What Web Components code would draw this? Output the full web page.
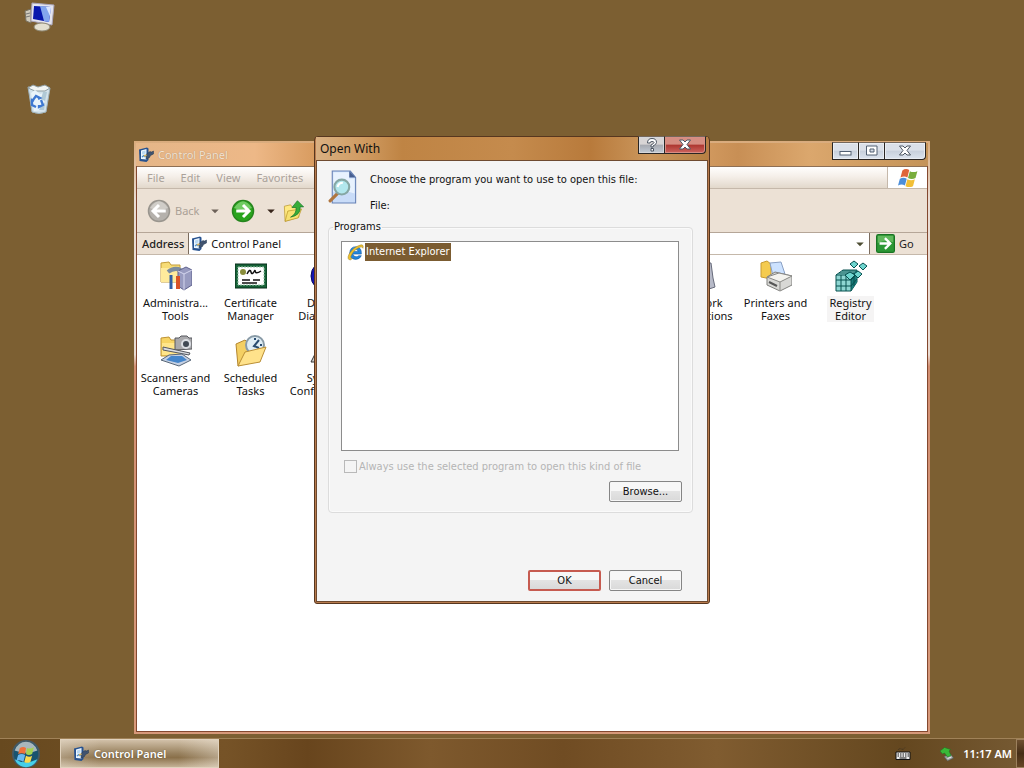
<!DOCTYPE html>
<html lang="en">
<head>
<meta charset="utf-8">
<title>Desktop</title>
<style>
  html, body {
    margin: 0;
    height: 100%;
  }
  body {
    font-family: "Noto Sans", "Open Sans", sans-serif;
    font-size: 11px;
    line-height: 13px;
    color: #111;
    cursor: default;
    overflow: hidden;
  }
</style>
</head>
<body>
<desk-top></desk-top>

<script>
// all artwork is drawn on a 32x32 grid
const ICONS = {
  computer: `
    <path d="M2 9l6-2v14l-5-2z" fill="#cfcabc" stroke="#77705f"/><path d="M3 12l4-1M3 15l4-1" stroke="#777"/>
    <path d="M9 1l22 2-2 20-21-4z" fill="#e4e4ee" stroke="#aaa6ba"/>
    <path d="M11 4l17 1-2 15-16-3z" fill="#0717ad"/><path d="M17 4l11 1-2 15-5-1z" fill="#83a6ee"/><path d="M23 5l5 0-1 9z" fill="#dbe6ff"/>
    <path d="M17 21h5v4h-5z" fill="#b5b19f"/><ellipse cx="19" cy="25" rx="8" ry="4" fill="#e4e0d0" stroke="#8f8974"/>`,
  bin: `
    <path d="M5 4l22 1-4 24q-7 3-14 0z" fill="#d3e2ea" stroke="#9fb2bb"/>
    <path d="M5 5l5-3 5 2 7-2 5 3-5 3-10 0z" fill="#f2f5f4" stroke="#8e9da3"/>
    <path d="M8 10l4-3 5 4 6-2-3 18-9 1z" fill="#eaf4fa"/><path d="M20 9l4 0-2 9-4-2zM18 22l4-2-1 7-5 0z" fill="#b0c9d6"/>
    <path d="M10 17l3-4 4 2-2 1M18 17l2 5-4 2v-2M13 24l-4-2 0-5 2 1" fill="none" stroke="#3e78d1" stroke-width="2.3"/>`,
  panel: `
    <path d="M2 5l16-4 3 2v23l-4 4-14-2z" fill="#27528f"/><path d="M6 7l11-3v21l-11-1z" fill="#edf7ff"/>
    <path d="M8 9l7-2v6l-7 2z" fill="#b9d8f2"/><path d="M8 20l4-3 3 3" fill="none" stroke="#4f90c9" stroke-width="3"/>
    <path d="M17 14l7-5 3 1 4-2v6l-6 3-2 4-7 3z" fill="#40536f" stroke="#233952"/><path d="M12 18l5-2" stroke="#d9b35d" stroke-width="3"/>`,
  back: `
    <circle cx="16" cy="16" r="14" fill="#b5b1ac" stroke="#99958e" stroke-width="2"/><path d="M4 12q12-18 24 0-12 5-24 0" fill="#d0cdc8"/>
    <path d="M25 16H9M16 8l-8 8 8 8" fill="none" stroke="#fff" stroke-width="4"/>`,
  forward: `
    <circle cx="16" cy="16" r="14" fill="#29a41e" stroke="#26851e" stroke-width="2"/><path d="M4 12q12-18 24 0-12 5-24 0" fill="#70cb63"/>
    <path d="M7 16h16M16 8l8 8-8 8" fill="none" stroke="#fff" stroke-width="4"/>`,
  up: `
    <path d="M2 9l9-2 3 4 9-1v15l-20 6z" fill="#ffe982" stroke="#b89328"/><path d="M7 16l20-3-5 13-19 5z" fill="#f7e070" stroke="#b89328"/>
    <path d="M11 25q9-5 8-14h-6l8-10 9 9h-5q1 12-14 15z" fill="#37ad38" stroke="#18752d"/>`,
  go: `
    <rect x="1" y="1" width="30" height="30" rx="3" fill="#2c9735" stroke="#187323" stroke-width="2"/><path d="M3 3h26v11q-12-5-26 1z" fill="#61b85d"/>
    <path d="M6 16h18M15 7l9 9-9 9" fill="none" stroke="#fff" stroke-width="4"/>`,
  flag: `
    <path d="M7 4q5-4 11-1l-3 12q-5-3-11 0z" fill="#df653a"/><path d="M19 5q5 3 12 0l-3 11q-6 3-12 0z" fill="#79ad3c"/>
    <path d="M3 17q6-3 11 0l-3 11q-5-3-11 0z" fill="#4c8ed9"/><path d="M15 18q6 3 12 0l-3 11q-6 3-12 0z" fill="#f2bf35"/>`,
  orb: `
    <circle cx="16" cy="16" r="15" fill="#18536f" stroke="#455963" stroke-width="2"/><path d="M3 22q12 7 26 0-4 9-13 9T3 22" fill="#45d0e9"/>
    <path d="M3 12Q7 2 16 2t13 10q-12 5-26 0" fill="#a9b7bb"/>
    <path d="M9 9q4-2 7 0l-1 7q-4-2-8 0z" fill="#ef713a"/><path d="M17 9q4 2 8-1l-2 8q-4 2-7 0z" fill="#a3d151"/>
    <path d="M7 17q4-2 8 0l-2 8q-4-3-8-1z" fill="#69b9f0"/><path d="M16 18q4 2 7 0l-2 7q-4 2-7 0z" fill="#fbd84e"/>`,
  search: `
    <path d="M4 1h17l5 6v24H4z" fill="#c9dcf8" stroke="#6681b5"/><path d="M5 2h15v6h5v14q-12-4-20-1z" fill="#e8f2fe"/><path d="M20 1l6 6h-6z" fill="#475f91"/>
    <path d="M2 29l8-8" stroke="#b0763f" stroke-width="3" stroke-linecap="round"/><circle cx="13" cy="16" r="7" fill="#b2e7ed" stroke="#86a7a4" stroke-width="2"/>
    <path d="M9 16q1-4 5-4" stroke="#fff" stroke-width="2" fill="none"/>`,
  ie: `
    <path d="M27 19H11q1 5 6 5 3 0 5-2h5q-3 7-11 7-11-1-11-12Q6 5 17 5q11 1 10 14M11 14h10q-1-4-5-4t-5 4" fill="#2286dd" stroke="#0f529f" fill-rule="evenodd"/>
    <path d="M6 30q-7-1-2-11Q12 6 25 2q7-2 5 6-1-4-6-2Q11 12 7 24q-2 4 3 3-1 2-4 3" fill="#efc12f" stroke="#9e8326"/>`,
  admin: `
    <path d="M1 3l8-1 2 3h9v17H1z" fill="#f7dc76" stroke="#c29b38"/><path d="M1 8h19v14H1z" fill="#ffeb9c"/>
    <path d="M8 12q6-5 13-2" fill="none" stroke="#7c8da0" stroke-width="4"/><path d="M18 11l8-4 6 3v15l-8 5-6-4z" fill="#989bc0" stroke="#5e608d"/>
    <path d="M18 11l6 3v16M24 14l8-4" fill="none" stroke="#d4d6ee"/><path d="M11 15v14" stroke="#315fa5" stroke-width="3"/><path d="M18 16v13" stroke="#d85328" stroke-width="4"/>`,
  cert: `
    <path d="M0 4h32v24H0z" fill="#176338" stroke="#072d19"/><path d="M3 7h26v18H3z" fill="#fff" stroke="#9bc5aa" stroke-dasharray="2 1"/>
    <circle cx="8" cy="12" r="3" fill="#898d3b"/><path d="M12 14q3-6 4-2t4-2q0 5 6 1M7 20h8M18 20h7M7 23h15" stroke="#111" stroke-width="1.5" fill="none"/>`,
  dx: `<circle cx="16" cy="16" r="15" fill="#1414b5" stroke="#07075c"/><path d="M8 7l16 18M24 7L8 25" stroke="#f4e640" stroke-width="4"/>`,
  scanner: `
    <path d="M1 3l8-1 2 3h9v16H1z" fill="#f7d464" stroke="#be9334"/><path d="M2 8h18v12H2z" fill="#ffe58a"/>
    <path d="M15 3h4l2-2h6l2 2h3v11l-17 1z" fill="#a9a9ac" stroke="#57595e"/><circle cx="26" cy="9" r="4" fill="#404953" stroke="#dadde2" stroke-width="2"/>
    <path d="M3 12l27 6-1 2-26-5z" fill="#d9dce2" stroke="#54575e"/><path d="M9 20l13-1 9 6-12 6-18-6z" fill="#c5d0e3" stroke="#586778"/><path d="M11 21l11 0 5 4-9 3-12-3z" fill="#4586cb"/>`,
  tasks: `
    <path d="M1 9l9-4 3 3 9-2v16L3 31z" fill="#f4cf63" stroke="#b4862e"/>
    <circle cx="20" cy="10" r="9" fill="#dfedf5" stroke="#899ba7" stroke-width="2"/><path d="M24 5l-5 6 5 2M20 3v2M27 10h-2" stroke="#294c70" stroke-width="2" fill="none"/>
    <path d="M3 31l7-14 21-5-6 15z" fill="#ffe28b" stroke="#ba8e35"/>`,
  config: `<path d="M1 27l4-8 5-2h12l8 10zM10 5h14v12H10z" fill="#cfcfcf" stroke="#333"/>`,
  network: `<path d="M8 5h14v14H8z" fill="#88aee0" stroke="#667"/><path d="M20 3l6 0 2 15 2 9-9 3z" fill="#b7bac8" stroke="#676b7b"/>`,
  printer: `
    <path d="M1 3l6-2 4 3v15l-10-2z" fill="#f4cb4f" stroke="#c79b32"/><path d="M10 3l11-1 4 12-12 2z" fill="#cce2ff" stroke="#8aa0c4"/>
    <path d="M7 17l8-5 17 4v9l-12 6-13-6z" fill="#d8d8d5" stroke="#81817e"/><path d="M7 17l13 5 12-6-13-3zM20 22v8" fill="#f4f3ee" stroke="#898986"/><path d="M9 22l8 4" stroke="#555" stroke-width="2"/>`,
  registry: `
    <path d="M1 15l7-5h14v12l-6 9H1z" fill="#8ed6d2" stroke="#07504f"/><path d="M16 15l6-5v12l-6 9z" fill="#187b79"/>
    <path d="M1 15h15v16M6 15v16M11 15v16M1 20h15M1 26h15M4 13h15v13M7 11h15M16 20l6-6M16 26l6-7" fill="none" stroke="#07504f"/>
    <path d="M10 15l5-3 5 3-5 5zM19 1l4 3-4 4-4-4zM28 3l4 3-4 4-4-4zM23 11l4 3-4 4-4-4z" fill="#6ed5cf" stroke="#07504f"/>`,
  keyboard: `<path d="M6 8q3-4 7-2t7-3" fill="none" stroke="#222" stroke-dasharray="2 1"/><path d="M2 12h28v15H2z" fill="#eee" stroke="#111" stroke-width="2"/><path d="M5 16h23M5 20h23" stroke="#111" stroke-width="2" stroke-dasharray="3 2"/><path d="M9 24h14" stroke="#111" stroke-width="2"/>`,
  eject: `<path d="M10 21l13-5 6 8-12 6z" fill="#9aa1a0" stroke="#4c5350"/><path d="M17 25l8-3" stroke="#eee" stroke-width="2"/><path d="M2 10l9-7 12 4-3 3 4 9-7 3-6-8-4 2z" fill="#39b838" stroke="#1b741d"/>`,
  min: `<rect x="4" y="17" width="22" height="7" fill="#fff" stroke="#526073" stroke-width="2"/>`,
  max: `<path d="M5 6h21v18H5zM12 12h8v6h-8z" fill="#fff" fill-rule="evenodd" stroke="#526073" stroke-width="2"/>`,
  close: `<path d="M5 6h7l4 4 4-4h7l-7 9 7 9h-7l-4-4-4 4H5l7-9z" fill="#fff" stroke="#4d5663" stroke-width="2"/>`,
  help: `<path d="M7 12q0-9 9-9t9 8q0 4-7 7v2h-4v-4q6-3 6-5t-4-2-4 3zM14 23h5v5h-5z" fill="#fff" stroke="#4d5663" stroke-width="2"/>`,
  arrow: `<path d="M4 11h24L16 23z" fill="currentColor"/>`
};

class GlyphIcon extends HTMLElement {
  connectedCallback() {
    const size = this.getAttribute('size') || 16;
    this.attachShadow({ mode: 'open' }).innerHTML = `
      <style>
        :host { display: block; flex: none; }
        svg { display: block; }
      </style>
      <svg width="${size}" height="${size}" viewBox="0 0 32 32" fill="none" aria-hidden="true">${ICONS[this.getAttribute('name')]}</svg>
    `;
  }
}

class FolderItem extends HTMLElement {
  connectedCallback() {
    this.attachShadow({ mode: 'open' }).innerHTML = `
      <style>
        :host {
          display: flex;
          flex-direction: column;
          align-items: center;
          gap: 4px;
          text-align: center;
        }
        .label { padding: 0 2px; }
        :host([focused]) .label { background: #f5f4f4; }
      </style>
      <glyph-icon name="${this.getAttribute('icon')}" size="32"></glyph-icon>
      <div class="label"><slot></slot></div>
    `;
  }
}

class CaptionButtons extends HTMLElement {
  connectedCallback() {
    const names = this.getAttribute('buttons').split(' ');
    this.attachShadow({ mode: 'open' }).innerHTML = `
      <style>
        :host { display: flex; flex: none; }
        button {
          width: 26px;
          height: 18px;
          padding: 0;
          display: flex;
          align-items: center;
          justify-content: center;
          border: 1px solid #2a2624;
          border-top-color: #75675b;
          border-right: 0;
          background: linear-gradient(#dbe0e9 45%, #c8d0dc 50%, #dbe3ee);
          box-shadow: inset 0 0 0 1px #e9edf3;
        }
        button:first-child { border-bottom-left-radius: 4px; }
        button:last-child {
          width: 42px;
          border-right: 1px solid #2a2624;
          border-bottom-right-radius: 4px;
        }
        :host([active]) button {
          background: linear-gradient(#d8d5d5 45%, #a6a9b0 50%, #c3cbd5);
          box-shadow: inset 0 0 0 1px #d5d7dc;
        }
        :host([active]) button:last-child {
          background: linear-gradient(#d68d82 45%, #ad3630 50%, #ce6560);
          box-shadow: inset 0 0 0 1px #d98e84;
        }
      </style>
      ${names.map((n) => `<button type="button" aria-label="${n}"><glyph-icon name="${n}" size="16"></glyph-icon></button>`).join('')}
    `;
  }
}

class PushButton extends HTMLElement {
  connectedCallback() {
    this.attachShadow({ mode: 'open' }).innerHTML = `
      <style>
        :host { display: block; }
        button {
          width: 73px;
          height: 21px;
          padding: 0;
          font: inherit;
          color: #111;
          border: 1px solid #858585;
          border-radius: 2px;
          background: linear-gradient(#f7f7f7 45%, #e3e3e3 50%, #d9d9d9);
          box-shadow: inset 0 0 0 1px #f6f6f6;
        }
        :host([default]) button {
          border: 2px solid #c65b50;
          box-shadow: none;
        }
      </style>
      <button type="button"><slot></slot></button>
    `;
  }
}

class ExplorerWindow extends HTMLElement {
  connectedCallback() {
    this.attachShadow({ mode: 'open' }).innerHTML = `
      <style>
        :host {
          display: flex;
          flex-direction: column;
          box-sizing: border-box;
          border: 2px solid;
          border-image: linear-gradient(#d9ab7c, #e9dcd3 10%, #e9dcd3 36%, #d28f72 38%, #d7997a) 2;
          background: #fff;
          box-shadow: inset 0 0 0 1px #84482f;
        }
        header {
          display: flex;
          align-items: center;
          gap: 4px;
          height: 23px;
          padding-left: 2px;
          background: linear-gradient(90deg, #e5b688, #edb887 15%, #cf8f4e 26%, #d69e63 70%, #c88f55 76%, #dba76d 85%, #c49358);
          color: #f6e4d2;
        }
        h1 {
          margin: 0;
          flex: 1;
          font: inherit;
          text-shadow: 0 0 1px #9c7c60;
        }
        caption-buttons { align-self: flex-start; margin: -1px 2px 0 0; }
        .bars { margin: 0 1px; background: #ece1d5; }
        nav {
          display: flex;
          height: 23px;
          border-top: 1px solid #8e6f54;
          border-bottom: 1px solid #c5b8aa;
          box-sizing: border-box;
          background: linear-gradient(#fffefd, #f5efe9 45%, #e2d8cb);
        }
        .menus { display: flex; align-items: center; gap: 16px; flex: 1; padding-left: 10px; }
        nav a { color: #aaa29a; text-decoration: none; }
        .brand {
          display: flex;
          width: 39px;
          align-items: center;
          justify-content: center;
          background: #fff;
          border-left: 1px solid #c5b8aa;
        }
        .tools { display: flex; align-items: center; height: 43px; padding-left: 10px; }
        .tools button {
          display: flex;
          align-items: center;
          gap: 4px;
          border: 0;
          padding: 0;
          background: none;
          font: inherit;
          color: #aaa096;
        }
        .tools .drop { margin: 0 11px; color: #6d6259; }
        .tools .drop.on { margin-right: 7px; color: #37251b; }
        .address {
          display: flex;
          align-items: center;
          height: 23px;
          border-top: 1px solid #b5a698;
          border-bottom: 1px solid #c5b8aa;
          box-sizing: border-box;
          padding-left: 5px;
        }
        .address label { color: #222; font-weight: 500; padding-right: 4px; }
        .field {
          display: flex;
          flex: 1;
          align-self: stretch;
          align-items: center;
          gap: 4px;
          padding: 0 4px 0 2px;
          background: #fff;
          border: solid #7b6c5e;
          border-width: 0 1px;
        }
        .field input {
          flex: 1;
          min-width: 0;
          border: 0;
          padding: 0;
          outline: 0;
          background: none;
          font: inherit;
          color: #111;
        }
        .field button { border: 0; padding: 0; background: none; color: #4d4d33; }
        .go {
          display: flex;
          align-items: center;
          gap: 4px;
          width: 57px;
          padding: 0 0 0 6px;
          box-sizing: border-box;
          border: 0;
          background: none;
          font: inherit;
          color: #222;
        }
        main {
          display: grid;
          grid-template-columns: repeat(auto-fill, 75px);
          grid-auto-rows: 75px;
          flex: 1;
          align-content: start;
          padding: 5px 2px 0;
        }
        .c8 { grid-column: 8; }
      </style>
      <header>
        <glyph-icon name="panel"></glyph-icon>
        <h1>Control Panel</h1>
        <caption-buttons buttons="min max close"></caption-buttons>
      </header>
      <div class="bars">
        <nav>
          <div class="menus"><a href="#">File</a><a href="#">Edit</a><a href="#">View</a><a href="#">Favorites</a></div>
          <div class="brand"><glyph-icon name="flag" size="20"></glyph-icon></div>
        </nav>
        <div class="tools">
          <button type="button"><glyph-icon name="back" size="24"></glyph-icon>Back</button>
          <button type="button" class="drop" aria-label="Back history"><glyph-icon name="arrow" size="10"></glyph-icon></button>
          <button type="button" aria-label="Forward"><glyph-icon name="forward" size="24"></glyph-icon></button>
          <button type="button" class="drop on" aria-label="Forward history"><glyph-icon name="arrow" size="10"></glyph-icon></button>
          <button type="button" aria-label="Up"><glyph-icon name="up" size="22"></glyph-icon></button>
        </div>
        <div class="address">
          <label for="path">Address</label>
          <div class="field">
            <glyph-icon name="panel"></glyph-icon>
            <input id="path" type="text" value="Control Panel">
            <button type="button" aria-label="Addresses"><glyph-icon name="arrow" size="10"></glyph-icon></button>
          </div>
          <button type="button" class="go"><glyph-icon name="go" size="19"></glyph-icon>Go</button>
        </div>
      </div>
      <main>
        <folder-item icon="admin">Administra...<br>Tools</folder-item>
        <folder-item icon="cert">Certificate<br>Manager</folder-item>
        <folder-item icon="dx">DirectX<br>Diagnostic</folder-item>
        <folder-item icon="network" class="c8">Network<br>Connections</folder-item>
        <folder-item icon="printer">Printers and<br>Faxes</folder-item>
        <folder-item icon="registry" focused>Registry<br>Editor</folder-item>
        <folder-item icon="scanner">Scanners and<br>Cameras</folder-item>
        <folder-item icon="tasks">Scheduled<br>Tasks</folder-item>
        <folder-item icon="config">System<br>Configuration</folder-item>
      </main>
    `;
  }
}

class OpenWithDialog extends HTMLElement {
  connectedCallback() {
    this.attachShadow({ mode: 'open' }).innerHTML = `
      <style>
        :host {
          display: block;
          box-sizing: border-box;
          border: 1px solid #57371f;
          border-radius: 4px 4px 3px 3px;
          padding: 0 1px 1px;
          background: #b87b4e;
          font-family: "DejaVu Sans Condensed", "DejaVu Sans", sans-serif;
        }
        header {
          display: flex;
          align-items: center;
          height: 23px;
          padding-left: 4px;
          background: linear-gradient(90deg, #d9b082, #d09b61 12%, #bf8444 22%, #c58b4d 50%, #b87a3b 70%, #cb975d 85%, #b78043);
        }
        h1 {
          margin: 0;
          flex: 1;
          font: 12px/14px "Noto Sans", sans-serif;
        }
        caption-buttons { align-self: flex-start; margin: -1px 2px 0 0; }
        .body {
          border: 1px solid #6e4a30;
          padding: 9px 14px 10px 11px;
          background: #f4f4f4;
        }
        .intro { display: flex; gap: 8px; }
        .intro p { margin: 0 0 13px; }
        .intro p:last-child { margin-bottom: 7px; }
        .text { padding-top: 3px; }
        fieldset {
          margin: 1px 0 0;
          padding: 7px 10px 10px 12px;
          min-width: 0;
          border: 1px solid #dcdcdc;
          border-radius: 4px;
          box-shadow: inset 0 0 0 1px #fafafa;
        }
        legend { margin-left: -8px; padding: 0 1px; line-height: 14px; }
        ul {
          list-style: none;
          height: 208px;
          margin: 0 3px 8px 0;
          padding: 0 0 0 5px;
          border: 1px solid #8c8c8c;
          background: #fff;
        }
        li { display: flex; align-items: center; gap: 1px; padding-top: 1px; }
        li span { padding: 2px 1px 3px; background: #7b5c31; color: #fff; }
        .always {
          display: flex;
          align-items: center;
          gap: 2px;
          height: 14px;
          margin: 0 0 8px 3px;
          color: #b5b5b5;
        }
        .always input {
          appearance: none;
          width: 13px;
          height: 13px;
          margin: 0;
          border: 1px solid #b9b9b9;
          background: #f4f4f4;
        }
        .row { display: flex; justify-content: flex-end; gap: 8px; }
        .actions { margin: 57px 11px 0 0; }
      </style>
      <header>
        <h1 id="title">Open With</h1>
        <caption-buttons buttons="help close" active></caption-buttons>
      </header>
      <div class="body" role="dialog" aria-labelledby="title">
        <div class="intro">
          <glyph-icon name="search" size="34"></glyph-icon>
          <div class="text">
            <p>Choose the program you want to use to open this file:</p>
            <p>File:</p>
          </div>
        </div>
        <fieldset>
          <legend>Programs</legend>
          <ul><li><glyph-icon name="ie" size="17"></glyph-icon><span>Internet Explorer</span></li></ul>
          <div class="always">
            <input type="checkbox" id="always" disabled>
            <label for="always">Always use the selected program to open this kind of file</label>
          </div>
          <div class="row"><push-button>Browse...</push-button></div>
        </fieldset>
        <div class="row actions">
          <push-button default>OK</push-button>
          <push-button>Cancel</push-button>
        </div>
      </div>
    `;
  }
}

class TaskBar extends HTMLElement {
  connectedCallback() {
    this.attachShadow({ mode: 'open' }).innerHTML = `
      <style>
        :host {
          display: flex;
          align-items: stretch;
          height: 30px;
          box-sizing: border-box;
          border-top: 1px solid #a08258;
          background: linear-gradient(90deg, #67491f, #765327 22%, #68451d 30%, #7e592d 42%, #704c23 55%, #805c30 70%, #64471f 88%, #765a33);
          color: #fff;
          font-weight: 600;
        }
        button { font: inherit; color: inherit; border: 0; padding: 0; background: none; }
        .start { padding: 1px 20px 0 12px; }
        .task {
          display: flex;
          align-items: center;
          gap: 5px;
          width: 159px;
          padding-left: 12px;
          border: 1px solid #e0d2bd;
          background: linear-gradient(90deg, #f1e9dd55, transparent 25%, transparent 75%, #f1e9dd66), linear-gradient(#d1c0a8, #97805d 50%, #8a704a 65%, #c4b296);
          text-shadow: 0 0 1px #55432a;
        }
        .tray { display: flex; align-items: center; margin-left: auto; }
        .tray glyph-icon:first-child { margin-right: 28px; }
        time { margin: 0 4px 0 8px; }
        .show {
          width: 8px;
          border: 1px solid #9c805d;
          border-right: 0;
          background: linear-gradient(#6e5030, #452d15 50%, #664625);
        }
      </style>
      <button type="button" class="start" aria-label="Start"><glyph-icon name="orb" size="28"></glyph-icon></button>
      <button type="button" class="task"><glyph-icon name="panel"></glyph-icon>Control Panel</button>
      <div class="tray">
        <glyph-icon name="keyboard"></glyph-icon>
        <glyph-icon name="eject"></glyph-icon>
        <time>11:17 AM</time>
      </div>
      <button type="button" class="show" aria-label="Show desktop"></button>
    `;
  }
}

class DeskTop extends HTMLElement {
  connectedCallback() {
    this.attachShadow({ mode: 'open' }).innerHTML = `
      <style>
        :host {
          display: flex;
          flex-direction: column;
          height: 100vh;
          background: #7c5f32;
        }
        .space { position: relative; flex: 1; }
        .shortcuts {
          display: flex;
          flex-direction: column;
          align-items: flex-start;
          gap: 49px;
          padding: 2px 0 0 23px;
        }
        explorer-window { position: absolute; inset: 141px 94px 4px 134px; }
        open-with-dialog { position: absolute; left: 314px; top: 136px; width: 396px; }
      </style>
      <div class="space">
        <div class="shortcuts">
          <glyph-icon name="computer" size="32"></glyph-icon>
          <glyph-icon name="bin" size="32"></glyph-icon>
        </div>
        <explorer-window></explorer-window>
        <open-with-dialog></open-with-dialog>
      </div>
      <task-bar></task-bar>
    `;
  }
}

customElements.define('glyph-icon', GlyphIcon);
customElements.define('folder-item', FolderItem);
customElements.define('caption-buttons', CaptionButtons);
customElements.define('push-button', PushButton);
customElements.define('explorer-window', ExplorerWindow);
customElements.define('open-with-dialog', OpenWithDialog);
customElements.define('task-bar', TaskBar);
customElements.define('desk-top', DeskTop);
</script>
</body>
</html>
